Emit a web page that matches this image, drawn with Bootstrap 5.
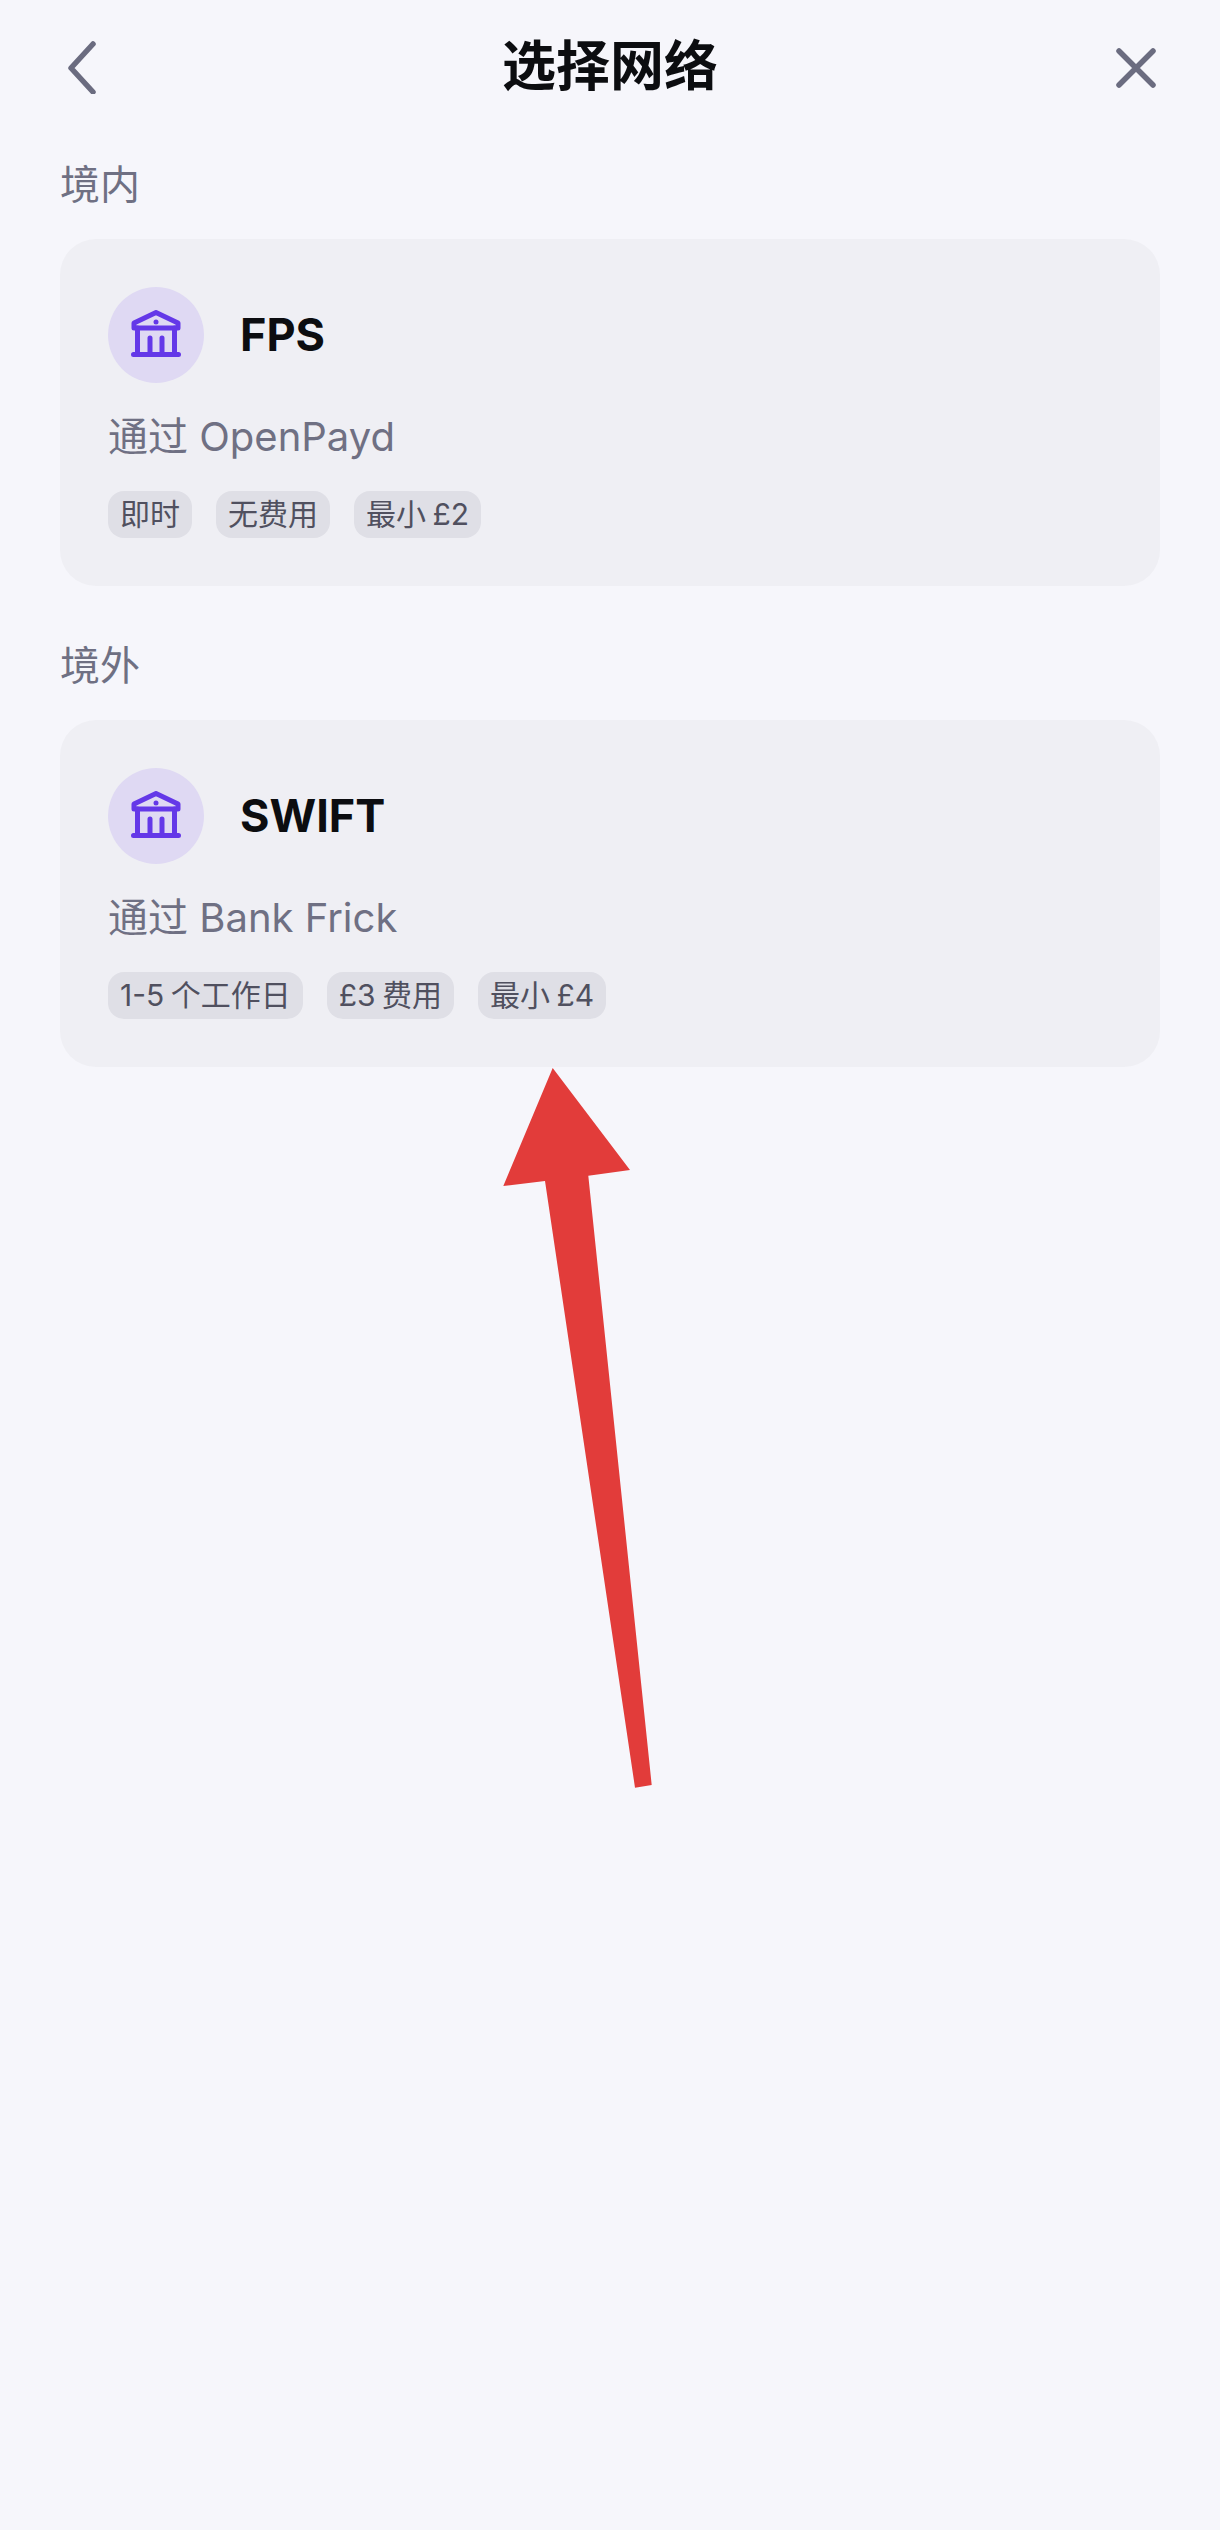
<!DOCTYPE html>
<html lang="zh-CN">
<head>
    <meta charset="UTF-8">
    <meta name="viewport" content="width=device-width, initial-scale=1.0">
    <title>选择网络</title>
    <link href="https://cdn.jsdelivr.net/npm/bootstrap@5.3.0/dist/css/bootstrap.min.css" rel="stylesheet">
    <style>
        body { background: #f6f6fb; font-family: Inter, "Noto Sans CJK SC", sans-serif; min-height: 2530px; }
        .page-wrap { padding: 0 60px; }
        .top-bar { height: 132px; }
        .top-title { font-size: 54px; font-weight: 700; color: #0c0d10; margin: 2px 0 0; line-height: 1; }
        .top-btn { width: 46px; height: 56px; }
        .group-label { font-size: 40px; line-height: 48px; color: #6f7083; margin-top: 29px; margin-bottom: 30px; }
        .net-card { background: #efeff4; border-radius: 36px; padding: 48px; margin-bottom: 56px; }
        .net-icon { width: 96px; height: 96px; background: #dfd9f3; }
        .net-icon svg { margin-bottom: 3px; }
        .net-name { font-size: 45px; font-weight: 700; color: #0c0d10; line-height: 1; margin: 0 0 2px 36px; }
        .net-sub { font-size: 40px; line-height: 60px; color: #6f7083; margin: 24px 0; }
        .net-chip { background: #dfdfe6; color: #50505f; font-size: 30px; line-height: 47px; height: 47px; padding: 0 12px; border-radius: 16px; word-spacing: -2px; }
        .chip-row { gap: 24px; }
        .arrow-over { position: absolute; left: 0; top: 0; pointer-events: none; }
    </style>
</head>
<body>
    <div class="page-wrap">
        <!-- header -->
        <div class="top-bar d-flex align-items-center justify-content-between">
            <svg class="top-btn" viewBox="0 0 46 56" fill="none" stroke="#6b6c80" stroke-width="5.500" stroke-linecap="round" stroke-linejoin="round">
                <path d="M33 6 L11 30 L33 54"/>
            </svg>
            <h1 class="top-title">选择网络</h1>
            <svg class="top-btn" viewBox="0 0 46 56" fill="none" stroke="#6b6c80" stroke-width="5.500" stroke-linecap="round">
                <path d="M5 13 L39 47 M39 13 L5 47"/>
            </svg>
        </div>

        <div class="group-label">境内</div>
        <div class="net-card">
            <div class="d-flex align-items-center">
                <div class="net-icon rounded-circle d-flex align-items-center justify-content-center">
                    <svg width="50" height="47" viewBox="0 0 50 47" fill="none" stroke="#6438e8" stroke-width="5" stroke-linecap="round" stroke-linejoin="round">
                        <path d="M3 18 V13 L25 2.500 L47 13 V18 Z"/>
                        <path d="M6.500 18 V44 M43.500 18 V44 M19 28 V44 M31 28 V44 M2.500 44.500 H47.500"/>
                        <circle cx="25" cy="12" r="2.500" fill="#6438e8" stroke="none"/>
                    </svg>
                </div>
                <div class="net-name">FPS</div>
            </div>
            <div class="net-sub">通过 OpenPayd</div>
            <div class="d-flex chip-row">
                <span class="net-chip">即时</span>
                <span class="net-chip">无费用</span>
                <span class="net-chip">最小 £2</span>
            </div>
        </div>

        <div class="group-label">境外</div>
        <div class="net-card">
            <div class="d-flex align-items-center">
                <div class="net-icon rounded-circle d-flex align-items-center justify-content-center">
                    <svg width="50" height="47" viewBox="0 0 50 47" fill="none" stroke="#6438e8" stroke-width="5" stroke-linecap="round" stroke-linejoin="round">
                        <path d="M3 18 V13 L25 2.500 L47 13 V18 Z"/>
                        <path d="M6.500 18 V44 M43.500 18 V44 M19 28 V44 M31 28 V44 M2.500 44.500 H47.500"/>
                        <circle cx="25" cy="12" r="2.500" fill="#6438e8" stroke="none"/>
                    </svg>
                </div>
                <div class="net-name">SWIFT</div>
            </div>
            <div class="net-sub">通过 Bank Frick</div>
            <div class="d-flex chip-row">
                <span class="net-chip">1-5 个工作日</span>
                <span class="net-chip">£3 费用</span>
                <span class="net-chip">最小 £4</span>
            </div>
        </div>
    </div>

    <!-- red annotation arrow over the page -->
    <svg class="arrow-over" width="1220" height="2530" viewBox="0 0 1220 2530">
        <polygon fill="#e23c3a" points="552.700,1068 630,1170 588.300,1175.700 651.700,1785 635,1787.700 545,1181 503.300,1186"/>
    </svg>

    <script src="https://cdn.jsdelivr.net/npm/bootstrap@5.3.0/dist/js/bootstrap.bundle.min.js"></script>
</body>
</html>
